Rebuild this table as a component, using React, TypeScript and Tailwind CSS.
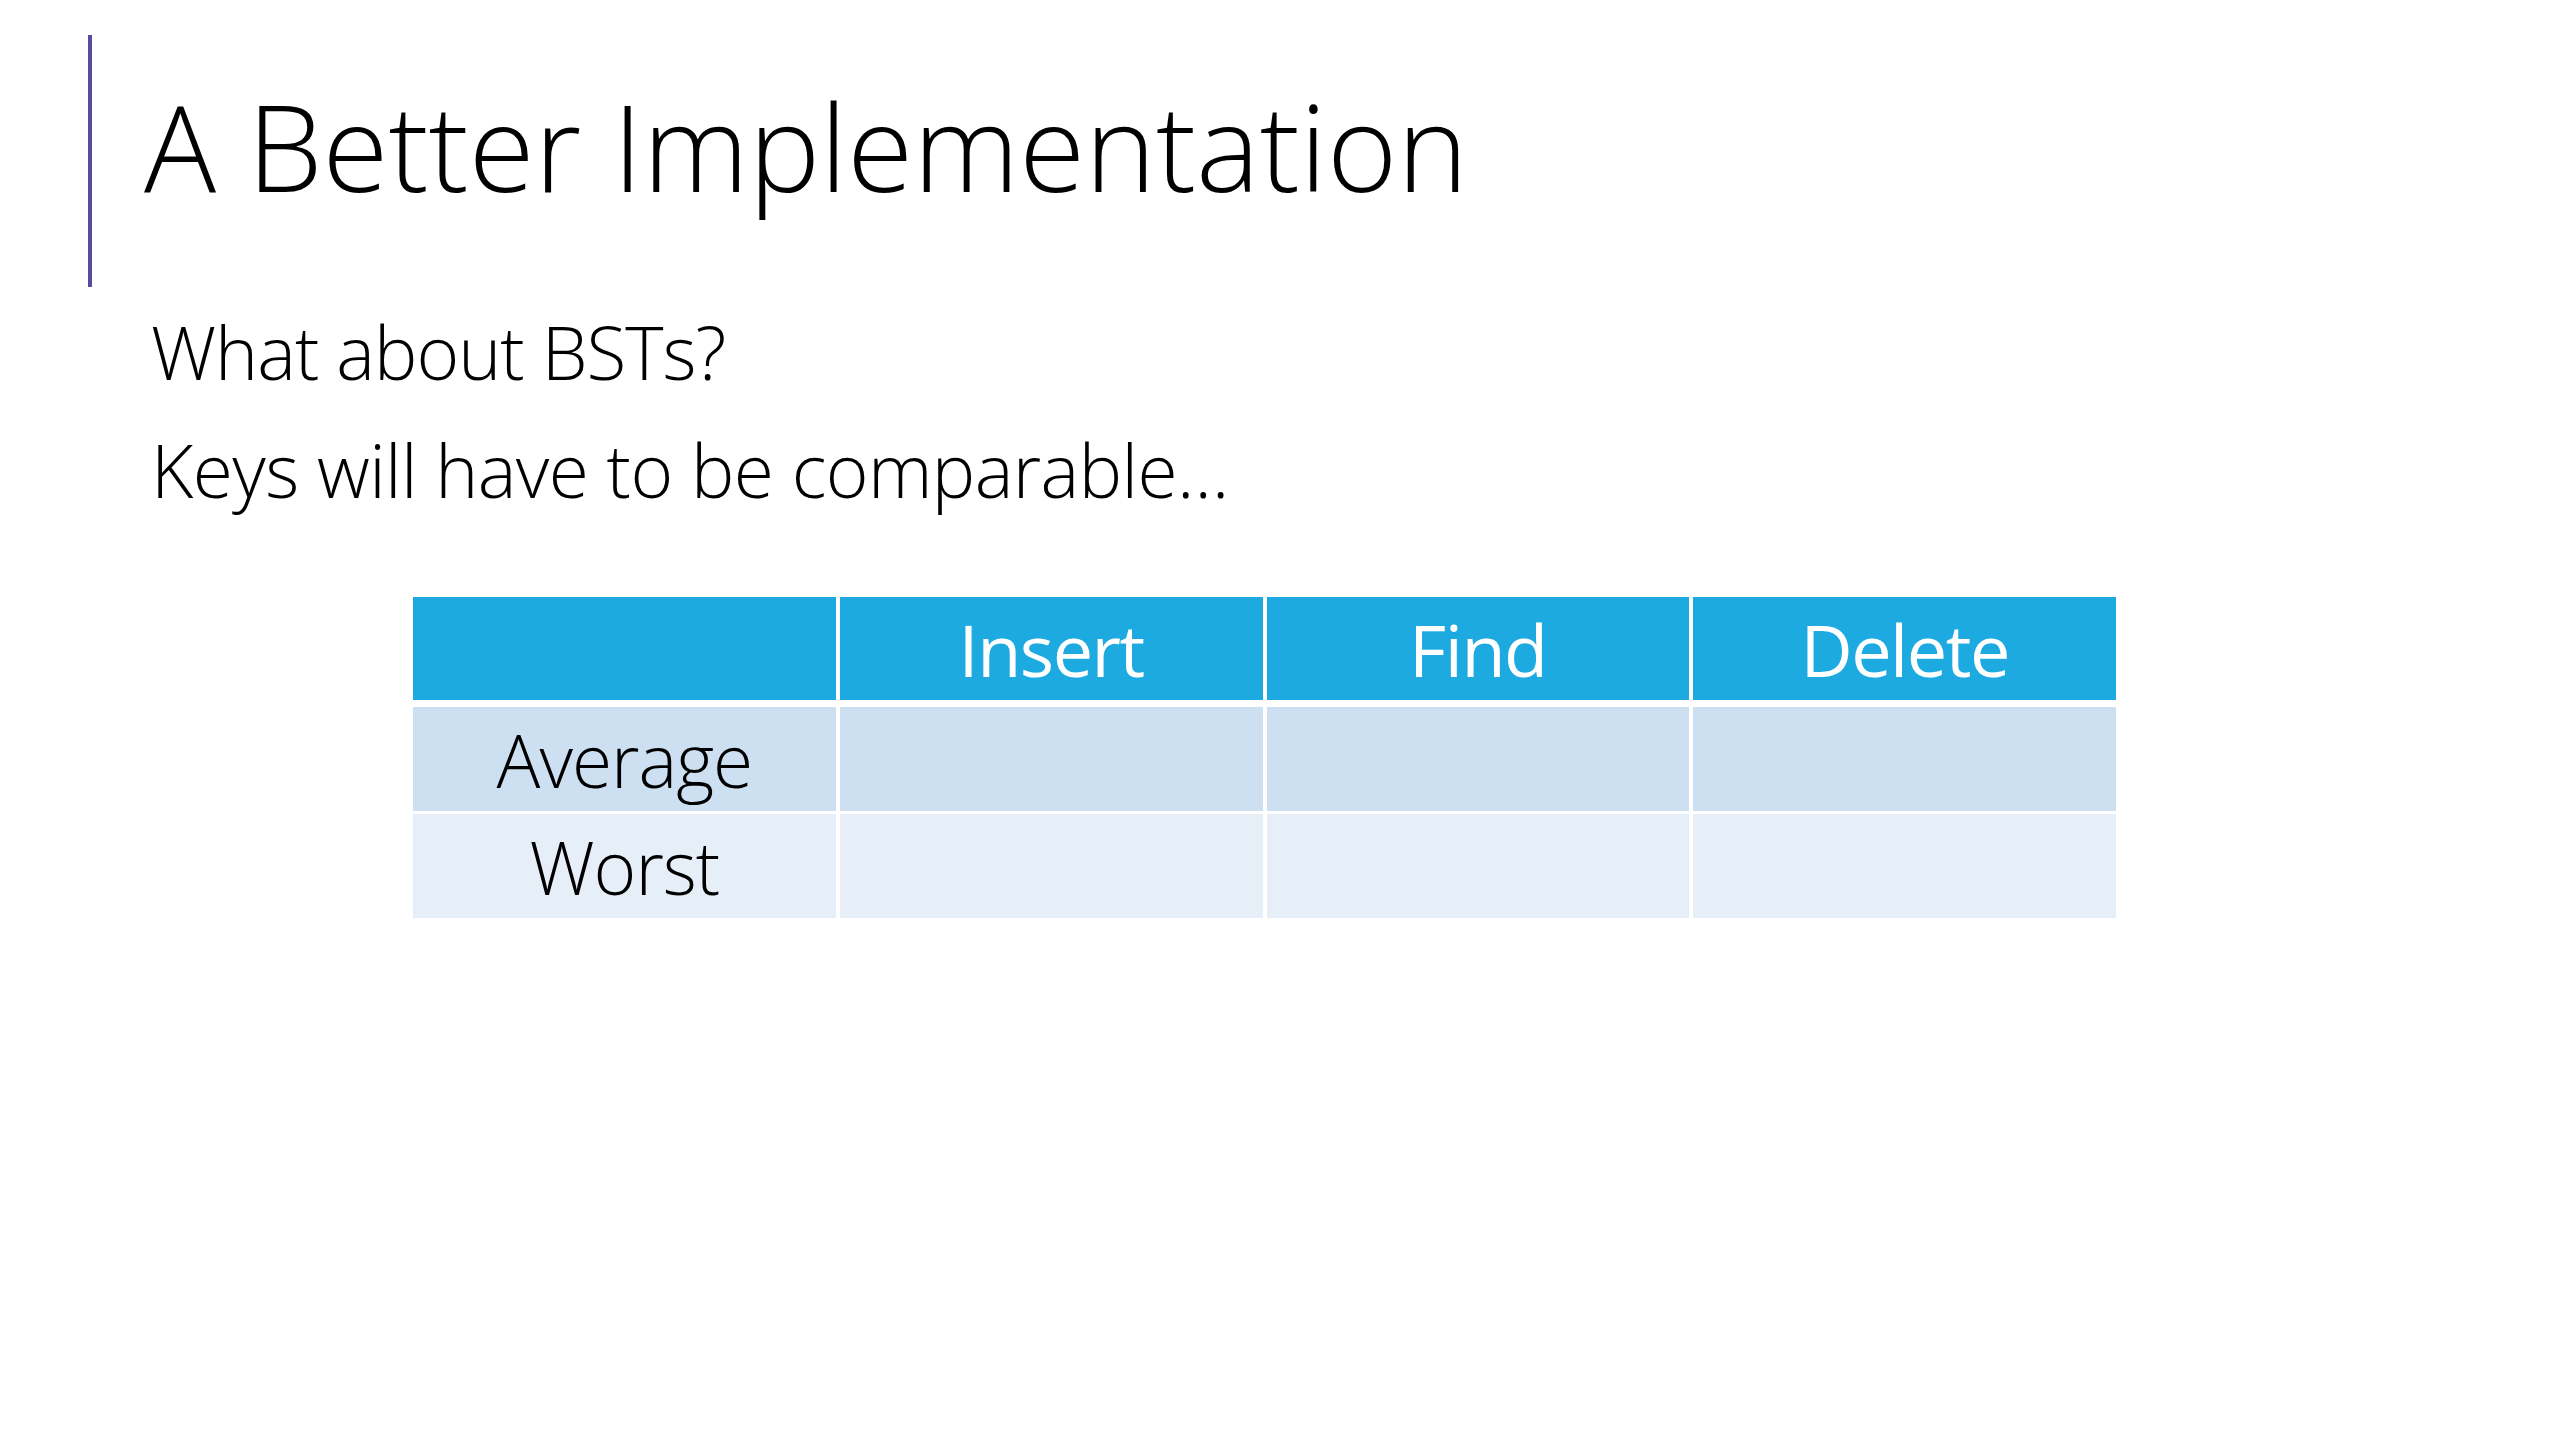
import React from 'react';

const columns = ['', 'Insert', 'Find', 'Delete'];
const rows = [
  { label: 'Average', bg: 'bg-[#cce0f2]' },
  { label: 'Worst', bg: 'bg-[#e6eff8]' },
];

const App = () => {
  return (
    <div className="w-[2560px] h-[1440px] bg-white text-black pt-[35px] font-['Open_Sans',sans-serif]">
      <div className="ml-[88px] h-[252px] border-l-[4px] border-[#5b4ba0] pl-[52px] pt-[51px]">
        <h1 className="text-[120px] leading-none font-light">A Better Implementation</h1>
      </div>

      <div className="ml-[151px] mt-[6px] text-[73px] leading-[118px] font-light">
        <p className="tracking-[-1px]">What about BSTs?</p>
        <p className="tracking-[-0.6px]">Keys will have to be comparable…</p>
      </div>

      <div className="ml-[413px] mt-[68px] w-[1703px]">
        <div className="grid grid-cols-4 gap-x-[4px] h-[103px] bg-white">
          {columns.map((c, i) => (
            <div key={i} className="bg-[#1caae1] flex items-center justify-center text-white text-[72px] leading-none tracking-[-1.5px]">
              {c}
            </div>
          ))}
        </div>
        <div className="mt-[7px] flex flex-col gap-y-[3px]">
          {rows.map(r => (
            <div key={r.label} className="grid grid-cols-4 gap-x-[4px] h-[104px]">
              <div className={`${r.bg} flex items-center justify-center text-[73px] leading-none font-light tracking-[-1px]`}>
                {r.label}
              </div>
              <div className={r.bg} />
              <div className={r.bg} />
              <div className={r.bg} />
            </div>
          ))}
        </div>
      </div>
    </div>
  );
};

export default App;
